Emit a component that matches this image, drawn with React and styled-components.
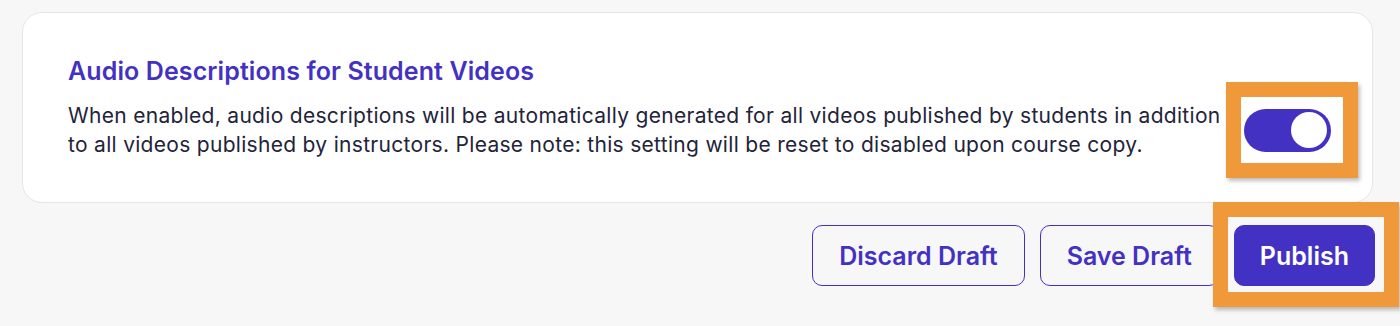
import React, { useState } from "react";
import styled, { createGlobalStyle } from "styled-components";

const GlobalStyle = createGlobalStyle`
  html, body {
    margin: 0;
    min-height: 100%;
    background: #f7f7f7;
    font-family: Inter, "Noto Sans", sans-serif;
    font-optical-sizing: none;
    font-variation-settings: "opsz" 14;
  }
  button {
    font-optical-sizing: none;
    font-variation-settings: "opsz" 14;
  }
`;

const Page = styled.div`
  box-sizing: border-box;
  min-height: 100vh;
  padding: 12px 25px 0 22px;
  display: flex;
  flex-direction: column;
`;

const Card = styled.section`
  background: #ffffff;
  border: 1px solid #e6e6e6;
  border-radius: 20px;
  margin-right: 2px;
  padding: 42px 41px 43px 45px;
  display: flex;
  flex-direction: column;
  gap: 14px;
`;

const Title = styled.h2`
  margin: 0;
  font-size: 25px;
  line-height: 32px;
  font-weight: 600;
  letter-spacing: 0.1px;
  color: #4331c4;
`;

const Row = styled.div`
  display: flex;
  align-items: center;
  gap: 20px;
`;

const Description = styled.p`
  flex: 1;
  margin: 0;
  font-size: 21px;
  line-height: 29px;
  letter-spacing: 0.3px;
  color: #23233a;
`;

// orange callout drawn around the highlighted controls
const Highlight = styled.div`
  position: relative;
  display: flex;
`;

const Callout = styled.span`
  position: absolute;
  top: ${(p) => p.$top}px;
  right: ${(p) => p.$right}px;
  bottom: ${(p) => p.$bottom}px;
  left: ${(p) => p.$left}px;
  border: 15px solid #f0993a;
  box-shadow: 2px 3px 4px rgba(0, 0, 0, 0.25);
  pointer-events: none;
`;

const Track = styled.button`
  width: 87px;
  height: 43px;
  border-radius: 22px;
  border: none;
  padding: 0 4px;
  background: ${(p) => (p.$on ? "#4331c4" : "#c9c9d6")};
  display: flex;
  align-items: center;
  justify-content: ${(p) => (p.$on ? "flex-end" : "flex-start")};
  cursor: pointer;
`;

const Knob = styled.span`
  width: 36px;
  height: 36px;
  border-radius: 50%;
  background: #ffffff;
`;

const Actions = styled.div`
  display: flex;
  justify-content: flex-end;
  align-items: flex-start;
  gap: 15px;
  margin-top: 22px;
`;

const Button = styled.button`
  height: 61px;
  padding: 0 ${(p) => (p.$primary ? 25 : 26)}px;
  border-radius: 10px;
  border: 1px solid #4331c4;
  background: ${(p) => (p.$primary ? "#4331c4" : "transparent")};
  color: ${(p) => (p.$primary ? "#ffffff" : "#4331c4")};
  font-family: Inter, "Noto Sans", sans-serif;
  font-size: 25px;
  font-weight: 600;
  cursor: pointer;
`;

export default function App() {
  const [enabled, setEnabled] = useState(true);

  return (
    <Page>
      <GlobalStyle />
      <Card>
        <Title>Audio Descriptions for Student Videos</Title>
        <Row>
          <Description>
            When enabled, audio descriptions will be automatically generated for all videos published by students in addition
            to all videos published by instructors. Please note: this setting will be reset to disabled upon course copy.
          </Description>
          <Highlight>
            <Track $on={enabled} onClick={() => setEnabled(!enabled)} aria-pressed={enabled}>
              <Knob />
            </Track>
            <Callout $top={-27} $right={-27} $bottom={-26} $left={-18} />
          </Highlight>
        </Row>
      </Card>
      <Actions>
        <Button>Discard Draft</Button>
        <Button>Save Draft</Button>
        <Highlight>
          <Button $primary>Publish</Button>
          <Callout $top={-23} $right={-24} $bottom={-21} $left={-21} />
        </Highlight>
      </Actions>
    </Page>
  );
}
